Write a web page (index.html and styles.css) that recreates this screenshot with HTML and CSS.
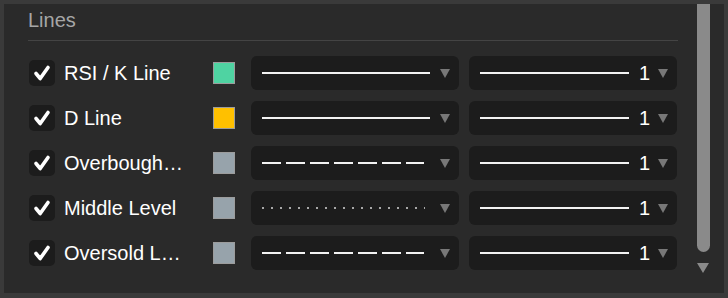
FILE: index.html
```html
<!DOCTYPE html>
<html lang="en">
  <head>
    <meta charset="UTF-8" />
    <title>Lines</title>
    <link rel="stylesheet" href="styles.css">
  </head>
  <body>
    <div class="frame">
      <div class="panel">
        <div class="content">
          <div class="section-title">Lines</div>

          <div class="row">
            <span class="check"><svg viewBox="0 0 26 26"><path d="M7 13.5 L11.2 18.5 L19 7.5" /></svg></span>
            <span class="label">RSI / K Line</span>
            <span class="swatch mint"></span>
            <div class="select style-select">
              <span class="line solid"></span>
              <span class="arrow"></span>
            </div>
            <div class="select width-select">
              <span class="line solid"></span>
              <span class="num">1</span>
              <span class="arrow"></span>
            </div>
          </div>

          <div class="row">
            <span class="check"><svg viewBox="0 0 26 26"><path d="M7 13.5 L11.2 18.5 L19 7.5" /></svg></span>
            <span class="label">D Line</span>
            <span class="swatch amber"></span>
            <div class="select style-select">
              <span class="line solid"></span>
              <span class="arrow"></span>
            </div>
            <div class="select width-select">
              <span class="line solid"></span>
              <span class="num">1</span>
              <span class="arrow"></span>
            </div>
          </div>

          <div class="row">
            <span class="check"><svg viewBox="0 0 26 26"><path d="M7 13.5 L11.2 18.5 L19 7.5" /></svg></span>
            <span class="label">Overbought Level</span>
            <span class="swatch grey"></span>
            <div class="select style-select">
              <span class="line dashed"></span>
              <span class="arrow"></span>
            </div>
            <div class="select width-select">
              <span class="line solid"></span>
              <span class="num">1</span>
              <span class="arrow"></span>
            </div>
          </div>

          <div class="row">
            <span class="check"><svg viewBox="0 0 26 26"><path d="M7 13.5 L11.2 18.5 L19 7.5" /></svg></span>
            <span class="label">Middle Level</span>
            <span class="swatch grey"></span>
            <div class="select style-select">
              <span class="line dotted"></span>
              <span class="arrow"></span>
            </div>
            <div class="select width-select">
              <span class="line solid"></span>
              <span class="num">1</span>
              <span class="arrow"></span>
            </div>
          </div>

          <div class="row">
            <span class="check"><svg viewBox="0 0 26 26"><path d="M7 13.5 L11.2 18.5 L19 7.5" /></svg></span>
            <span class="label">Oversold Level</span>
            <span class="swatch grey"></span>
            <div class="select style-select">
              <span class="line dashed"></span>
              <span class="arrow"></span>
            </div>
            <div class="select width-select">
              <span class="line solid"></span>
              <span class="num">1</span>
              <span class="arrow"></span>
            </div>
          </div>
        </div>

        <div class="scrollbar">
          <div class="thumb"></div>
          <span class="scroll-down"></span>
        </div>
      </div>
    </div>
  </body>
</html>
```

FILE: styles.css
```css
html,
body {
  margin: 0;
  padding: 0;
  background-color: #3a3a3a;
  font-family: "Liberation Sans", Arial, sans-serif;
}

.frame {
  width: 728px;
  height: 298px;
  padding: 4px 4px 5px 4px;
  box-sizing: border-box;
}

.panel {
  display: flex;
  height: 100%;
  background-color: #2a2a2a;
}

.content {
  flex: 1;
  padding: 0 18px 0 24px;
}

.section-title {
  height: 36px;
  line-height: 33px;
  font-size: 20px;
  color: #a6a6a6;
  border-bottom: 1px solid #444444;
}

.row {
  display: flex;
  align-items: center;
  height: 34px;
  margin-top: 11px;
}

.section-title + .row {
  margin-top: 15px;
}

.check {
  display: block;
  width: 26px;
  height: 26px;
  margin-left: 1px;
  border-radius: 5px;
  background-color: #1c1c1c;
}

.check svg {
  display: block;
  width: 26px;
  height: 26px;
}

.check path {
  fill: none;
  stroke: #ffffff;
  stroke-width: 3.6;
  stroke-linecap: round;
  stroke-linejoin: round;
}

.label {
  width: 121px;
  margin-left: 9px;
  margin-right: 28px;
  font-size: 20px;
  color: #ffffff;
  white-space: nowrap;
  overflow: hidden;
  text-overflow: ellipsis;
}

.swatch {
  width: 20px;
  height: 20px;
  border: 1px solid #9c9c9c;
  margin-right: 16px;
}

.swatch.mint {
  background-color: #4fd3a2;
}

.swatch.amber {
  background-color: #ffc000;
}

.swatch.grey {
  background-color: #97a3ab;
}

.select {
  display: flex;
  align-items: center;
  width: 208px;
  height: 34px;
  box-sizing: border-box;
  padding: 0 9px 0 11px;
  border-radius: 6px;
  background-color: #1c1c1c;
}

.style-select {
  margin-right: 10px;
}

.line {
  display: block;
  height: 2px;
}

.style-select .line {
  width: 169px;
  margin-right: 10px;
}

.width-select .line {
  width: 150px;
  margin-right: 10px;
}

.line.solid {
  background-color: #f2f2f2;
}

.style-select .line.dashed {
  background-image: linear-gradient(to right, #f2f2f2 0 19px, transparent 19px 24px);
  background-size: 24px 2px;
  width: 163px;
  margin-right: 16px;
}

.style-select .line.dotted {
  width: 164px;
  margin-right: 15px;
  background-image: linear-gradient(to right, #a8a8a8 0 2px, transparent 2px 9px);
  background-size: 9px 2px;
}

.num {
  width: 10px;
  font-size: 20px;
  color: #ffffff;
  margin-right: 9px;
}

.arrow {
  width: 0;
  height: 0;
  border-left: 5px solid transparent;
  border-right: 5px solid transparent;
  border-top: 9px solid #787878;
}

.scrollbar {
  display: flex;
  flex-direction: column;
  align-items: center;
  width: 14px;
  margin-right: 14px;
}

.thumb {
  width: 13px;
  height: 248px;
  background-color: #8a8a8a;
  border-radius: 0 0 7px 7px;
}

.scroll-down {
  margin-top: 11px;
  width: 0;
  height: 0;
  border-left: 6px solid transparent;
  border-right: 6px solid transparent;
  border-top: 10px solid #8a8a8a;
}
```
